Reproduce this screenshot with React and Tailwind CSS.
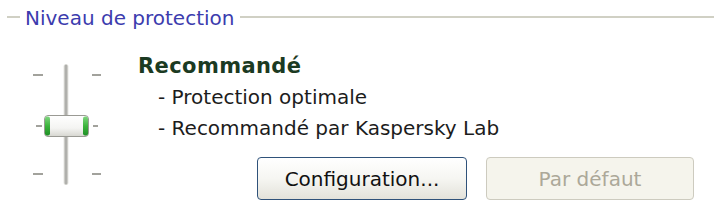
import React from "react";

function Slider() {
  return (
    <svg width="75" height="130" viewBox="0 0 75 130" className="block shrink-0">
      <defs>
        <linearGradient id="thumb" x1="0" y1="0" x2="0" y2="1">
          <stop offset="0" stopColor="#ffffff" />
          <stop offset="0.6" stopColor="#f4f4f2" />
          <stop offset="1" stopColor="#d6d6d0" />
        </linearGradient>
        <linearGradient id="cap" x1="0" y1="0" x2="0" y2="1">
          <stop offset="0" stopColor="#7fd67f" />
          <stop offset="0.5" stopColor="#3cb43c" />
          <stop offset="1" stopColor="#1f8f26" />
        </linearGradient>
      </defs>
      {/* track */}
      <rect x="33.5" y="4" width="5" height="121" rx="2.5" fill="#e8e8e4" />
      <rect x="34.5" y="4.5" width="3" height="120" rx="1.5" fill="#b0b0ac" />
      {/* ticks */}
      <g stroke="#a2a29c" strokeWidth="2">
        <line x1="3" y1="15" x2="13" y2="15" />
        <line x1="62" y1="15" x2="71" y2="15" />
        <line x1="6" y1="66" x2="12" y2="66" />
        <line x1="63" y1="66" x2="68" y2="66" />
        <line x1="3" y1="114" x2="13" y2="114" />
        <line x1="62" y1="114" x2="71" y2="114" />
      </g>
      {/* thumb */}
      <rect x="14.5" y="55.5" width="44" height="21" rx="3.5" fill="url(#thumb)" stroke="#9a9a94" />
      <rect x="15" y="56.5" width="5" height="19" rx="2" fill="url(#cap)" />
      <rect x="53" y="56.5" width="5" height="19" rx="2" fill="url(#cap)" />
    </svg>
  );
}

export default function App() {
  return (
    <div
      className="w-[714px] h-[204px] bg-white overflow-hidden"
      style={{ fontFamily: '"DejaVu Sans", Verdana, sans-serif' }}
    >
      <div className="flex h-[24px] mt-[6px]">
        <div className="ml-[7px] w-[13px] h-[2px] mt-[10px] bg-[#d0d0c4]" />
        <div className="ml-[5px] text-[20px] leading-[24px] text-[#3c3cae] whitespace-nowrap">
          Niveau de protection
        </div>
        <div className="flex-1 ml-[6px] h-[2px] mt-[10px] bg-[#d0d0c4]" />
      </div>
      <div className="flex">
        <div className="ml-[30px] mt-[30px]">
          <Slider />
        </div>
        <div className="ml-[33px] pt-[20.5px] flex flex-col">
          <div className="text-[21px] leading-[31px] font-bold tracking-[0.4px] text-[#1b3a22] whitespace-nowrap">
            Recommandé
          </div>
          <div className="pl-[20px] text-[20px] leading-[31px] text-[#1c1c1c] whitespace-nowrap">
            - Protection optimale
          </div>
          <div className="pl-[20px] text-[20px] leading-[31px] text-[#1c1c1c] whitespace-nowrap">
            - Recommandé par Kaspersky Lab
          </div>
          <div className="flex ml-[119px] mt-[13.5px] gap-[19px]">
            <button className="w-[210px] h-[43px] rounded-[4px] border-[1.5px] border-[#2f527a] bg-gradient-to-b from-[#ffffff] via-[#f6f6f2] to-[#e3e2da] text-[20px] text-[#111] flex items-center justify-center whitespace-nowrap">
              Configuration...
            </button>
            <button className="w-[208px] h-[43px] rounded-[4px] border-[1.5px] border-[#cdcbbf] bg-[#f5f4ec] text-[20px] text-[#aca899] flex items-center justify-center whitespace-nowrap">
              Par défaut
            </button>
          </div>
        </div>
      </div>
    </div>
  );
}
